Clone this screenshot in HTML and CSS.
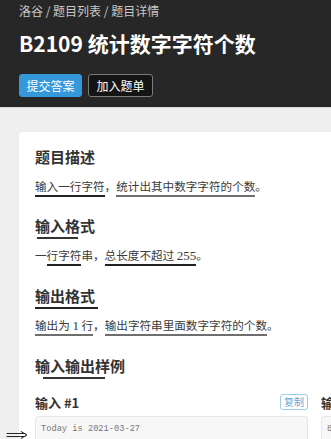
FILE: index.html
```html
<!DOCTYPE html>
<html lang="zh-CN">
<head>
    <meta charset="UTF-8">
    <meta name="viewport" content="width=device-width, initial-scale=1.0">
    <title>B2109 统计数字字符个数 - 洛谷</title>
    <link rel="stylesheet" href="styles.css">
</head>
<body>
    <div class="header">
        <div class="crumbs">洛谷 / 题目列表 / 题目详情</div>
        <h1 class="title">B2109 统计数字字符个数</h1>
        <div class="actions">
            <button class="btn btn-submit">提交答案</button>
            <button class="btn btn-list">加入题单</button>
        </div>
    </div>

    <div class="main">
        <div class="card">
            <div class="section">
                <h2 class="sec-title">题目描述</h2>
                <p class="sec-text"><span class="ul ul-dark">输入一行字符</span>，<span class="ul ul-gray">统计出其中数字字符的个数</span>。</p>
            </div>

            <div class="section">
                <h2 class="sec-title"><span class="hmark hmark-a">输入格式</span></h2>
                <p class="sec-text">一<span class="ul ul-dark">行字符</span>串，<span class="ul ul-dark">总长度不超过 <span class="math">255</span></span>。</p>
            </div>

            <div class="section">
                <h2 class="sec-title"><span class="hmark hmark-b">输出格式</span></h2>
                <p class="sec-text"><span class="ul ul-gray">输出为 <span class="math">1</span> 行</span>，<span class="ul ul-gray">输出字符串里面数字字符的个数</span>。</p>
            </div>

            <div class="section">
                <h2 class="sec-title"><span class="hmark hmark-c">输入输出样例</span></h2>
                <div class="samples">
                    <div class="sample">
                        <div class="sample-head">
                            <span class="sample-name">输入 #1</span>
                            <button class="copy">复制</button>
                        </div>
                        <pre class="code">Today is 2021-03-27</pre>
                    </div>
                    <div class="sample">
                        <div class="sample-head">
                            <span class="sample-name">输出 #1</span>
                            <button class="copy">复制</button>
                        </div>
                        <pre class="code">8</pre>
                    </div>
                </div>
            </div>
        </div>
    </div>

    <!-- pen mark left over from the annotated screenshot -->
    <svg class="pen-arrow" width="24" height="8" viewBox="0 0 24 8">
        <path d="M1 2.5 H19 M1 5.5 H19 M15 0.5 L21 4 L15 7.5" fill="none" stroke="#222" stroke-width="1" stroke-linecap="round"/>
    </svg>
</body>
</html>
```

FILE: styles.css
```css
* {
    margin: 0;
    padding: 0;
    box-sizing: border-box;
}

body {
    font-family: 'Noto Sans CJK SC', 'Noto Sans', sans-serif;
    background-color: #efefef;
    color: #333;
    width: 331px;
    height: 439px;
    overflow: hidden;
    position: relative;
}

.header {
    background-color: #272727;
    padding: 3px 19px 10px;
    border-bottom: 1px solid #d8d8d8;
}

.crumbs {
    font-size: 12px;
    line-height: 16px;
    color: #c8c8c8;
}

.title {
    margin-top: 10px;
    font-size: 21px;
    line-height: 28px;
    font-weight: 700;
    color: #fff;
    white-space: nowrap;
}

.actions {
    display: flex;
    gap: 6px;
    margin-top: 17px;
}

.btn {
    height: 23px;
    padding: 0;
    font-family: inherit;
    font-size: 12px;
    white-space: nowrap;
    border-radius: 3px;
    color: #fff;
    cursor: pointer;
}

.btn-submit {
    background-color: #3498db;
    border: 1px solid #3498db;
    width: 63px;
}

.btn-list {
    background-color: #141414;
    border: 1px solid #7a7a7a;
    width: 65px;
}

.main {
    padding: 24px 0 0 19px;
}

.card {
    width: 640px;
    background-color: #fff;
    border-radius: 4px;
    padding: 15px 16px;
}

.section + .section {
    margin-top: 20px;
}

.sec-title {
    font-size: 15px;
    line-height: 20px;
    font-weight: 700;
    color: #333;
    margin-bottom: 9px;
}

.sec-text {
    font-size: 11.6px;
    line-height: 20px;
    color: #3a3a3a;
}

.math {
    font-family: 'Liberation Serif', serif;
    font-size: 13px;
}

.ul {
    padding-bottom: 1px;
    border-bottom: 2px solid #222;
}

.ul-gray {
    border-bottom-color: #6e6e6e;
}

.hmark {
    position: relative;
    display: inline-block;
}

.hmark::after {
    content: '';
    position: absolute;
    height: 2px;
    bottom: -3px;
    background-color: #333;
}

.hmark-a::after {
    left: 2px;
    width: 41px;
}

.hmark-b::after {
    left: 0;
    width: 63px;
    background-color: #222;
}

.hmark-c::after {
    left: 8px;
    width: 62px;
}

.section:last-child .sec-title {
    margin-bottom: 16px;
}

.samples {
    display: grid;
    grid-template-columns: 273px 273px;
    gap: 13px;
}

.sample-head {
    display: flex;
    justify-content: space-between;
    align-items: center;
    height: 20px;
    margin-bottom: 4px;
}

.sample-name {
    font-size: 13px;
    font-weight: 700;
    color: #333;
}

.copy {
    font-family: inherit;
    font-size: 10px;
    line-height: 12px;
    padding: 1px 3px;
    color: #5aa9d8;
    background-color: #fff;
    border: 1px solid #9ccbe6;
    border-radius: 3px;
}

.code {
    font-family: 'Liberation Mono', monospace;
    font-size: 8.7px;
    line-height: 14px;
    color: #777;
    background-color: #f7f7f7;
    border: 1px solid #e6e6e6;
    border-radius: 3px;
    padding: 5px 5px;
    height: 60px;
}

.pen-arrow {
    position: absolute;
    left: 6px;
    top: 431px;
}
```
